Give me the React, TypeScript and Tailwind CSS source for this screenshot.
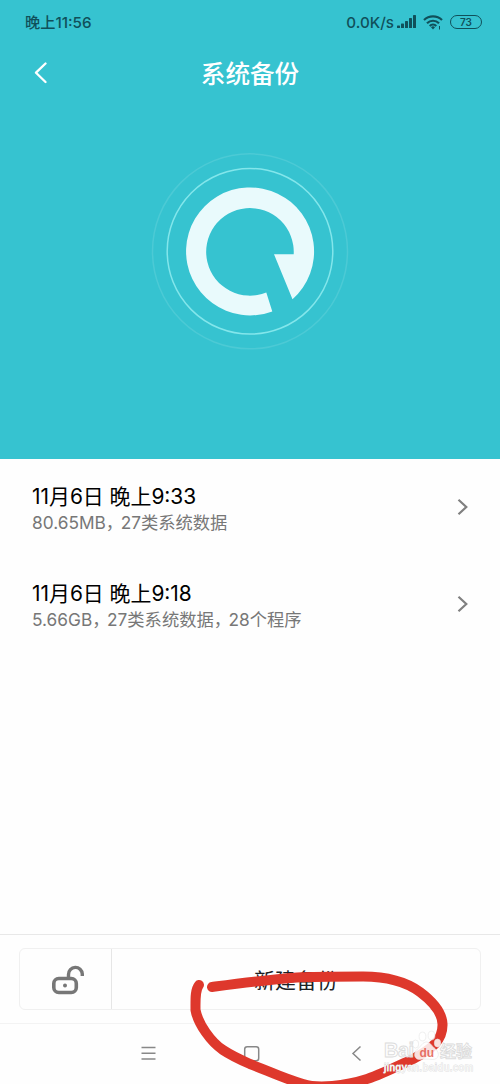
import { type FC } from 'react';

const backups = [
  {
    title: '11月6日 晚上9:33',
    details: ['80.65MB', '27类系统数据']
  },
  {
    title: '11月6日 晚上9:18',
    details: ['5.66GB', '27类系统数据', '28个程序']
  }
];

const StatusBar: FC = () => (
  <div className="flex h-[45px] items-center justify-between pr-[18px] pl-[25px] text-[#10505a]">
    <span className="pt-[2px] text-[15.2px] font-medium whitespace-nowrap">晚上11:56</span>
    <div className="flex items-center">
      <span className="mr-[3px] pt-px text-[15.2px] font-medium whitespace-nowrap">
        0.0K/s
      </span>
      <svg width="19" height="14" viewBox="0 0 19 14" fill="currentColor">
        <rect x="0" y="10.5" width="3" height="2.5" rx="0.6" />
        <rect x="4" y="8.5" width="3" height="4.5" rx="0.6" />
        <rect x="8" y="6" width="3" height="7" rx="0.6" />
        <rect x="12" y="3" width="3" height="10" rx="0.6" />
        <rect x="16" y="0" width="3" height="13" rx="0.6" />
      </svg>
      <svg
        className="ml-[7px]"
        width="20"
        height="15"
        viewBox="0 0 20 15"
        fill="none"
        stroke="currentColor"
        strokeWidth="2.2"
      >
        <path d="M1 5a13 13 0 0 1 18 0" />
        <path d="M4 8.2a8.6 8.6 0 0 1 12 0" />
        <path d="M6.7 11a4.7 4.7 0 0 1 6.6 0" />
        <path d="M8 12.2a3 3 0 0 1 4 0l-2 2.3z" fill="currentColor" stroke="none" />
        <path d="M16.5 11v3.5" strokeWidth="1" />
      </svg>
      <span className="ml-[7px] flex h-[14px] w-[32px] items-center justify-center rounded-full border-[1.5px] border-[#10505a] text-[10px] leading-none font-semibold">
        73
      </span>
    </div>
  </div>
);

const BackupLogo: FC = () => (
  <svg width="200" height="200" viewBox="150 151 200 200" fill="none">
    <circle cx="250" cy="251.3" r="97.5" stroke="#4ccad5" strokeWidth="1.5" />
    <circle cx="250" cy="251.3" r="82.8" stroke="#83e6eb" strokeWidth="1.5" />
    <path
      d="M272.3 311.4A64 64 0 1 1 292.5 299.3L274 254.3H293.7A43.8 43.8 0 1 0 266.3 292.5Z"
      fill="#e9fafc"
    />
  </svg>
);

const LockIcon: FC = () => (
  <svg width="32" height="30" viewBox="0 0 32 30" fill="none" stroke="#777">
    <rect x="1.8" y="13.5" width="22.5" height="14" rx="5" strokeWidth="3.6" />
    <path d="M16.5 13.5V9.500A6.800 6.800 0 0 1 30.300 9v2" strokeWidth="3.4" />
    <circle cx="13" cy="20.5" r="2" fill="#777" stroke="none" />
  </svg>
);

const Watermark: FC = () => (
  <div className="absolute top-[1028px] left-[383px] w-[100px] font-['Liberation_Sans','Noto_Sans_CJK_SC',sans-serif]">
    <svg width="106" height="48" viewBox="0 0 106 48" className="overflow-visible">
      <g fill="#fff" fillOpacity="0.85" stroke="#e4e4e4" strokeWidth="0.6">
        <ellipse cx="32.5" cy="16" rx="3.2" ry="4" />
        <ellipse cx="39.5" cy="8.5" rx="3.4" ry="4.4" />
        <ellipse cx="48.5" cy="7.5" rx="3.4" ry="4.4" />
        <ellipse cx="54.5" cy="15" rx="3.2" ry="4" />
        <path d="M43.5 14c-4 0-5 4-9 7-5 4.5-3 10.5 2 10.5 4-.6 9-.6 13 0 6 0 8-6 3-10.5-4-3-5-7-9-7z" />
        <g strokeWidth="0.9" stroke="#dcdcdc">
          <text x="1" y="29" fontSize="20" textLength="30" fontWeight="bold">
            Bai
          </text>
          <text x="57" y="29" fontSize="16" textLength="32" fontWeight="bold">
            经验
          </text>
        </g>
      </g>
      <text x="36.5" y="29" fontSize="12" fontWeight="bold" fill="#dc3a2c" fillOpacity="0.7">
        du
      </text>
      <text
        x="1"
        y="42.5"
        fontSize="10"
        textLength="89"
        fill="#fff"
        fillOpacity="0.9"
        stroke="#dedede"
        strokeWidth="0.9"
        paintOrder="stroke"
      >
        jingyan.baidu.com
      </text>
    </svg>
  </div>
);

export default function App() {
  return (
    <div className="relative flex h-[1084px] w-[500px] flex-col overflow-hidden bg-[#fefefe] font-['Inter','Noto_Sans_CJK_SC',sans-serif]">
      <header className="flex h-[459px] shrink-0 flex-col bg-[#36c3d0]">
        <StatusBar />
        <div className="grid h-[55px] grid-cols-3 items-center">
          <svg
            className="ml-[33px]"
            width="16"
            height="22"
            viewBox="0 0 16 22"
            fill="none"
            stroke="#fff"
            strokeWidth="2.3"
            strokeLinecap="round"
            strokeLinejoin="round"
          >
            <path d="M12.5 1.5L3 10.7L12.5 20" />
          </svg>
          <h1 className="pt-[3px] text-center text-[24.6px] font-medium whitespace-nowrap text-white">
            系统备份
          </h1>
        </div>
        <div className="mt-[51px] flex justify-center">
          <BackupLogo />
        </div>
      </header>

      <main className="flex grow flex-col pt-[24px]">
        {backups.map((backup) => (
          <div
            key={backup.title}
            className="mb-[24px] flex h-[73px] items-start justify-between pr-[31px] pl-[32px]"
          >
            <div className="whitespace-nowrap">
              <div className="text-[20.9px] leading-[27px] text-black">
                {backup.title}
              </div>
              <div className="text-[17.3px] leading-[25px] text-[#777]">
                {backup.details.map((detail, i) => (
                  <span key={detail}>
                    {i > 0 && <span className="tracking-[-2.5px]">，</span>}
                    {detail}
                  </span>
                ))}
              </div>
            </div>
            <svg
              className="mt-[15px]"
              width="12"
              height="18"
              viewBox="0 0 12 18"
              fill="none"
              stroke="#808080"
              strokeWidth="2.2"
            >
              <path d="M1.5 1.7L9.3 9L1.5 16.3" />
            </svg>
          </div>
        ))}
      </main>

      <footer className="h-[150px] shrink-0 border-t border-[#e8e8e8]">
        <div className="mx-[19px] mt-[13px] flex h-[62px] rounded-md border border-[#f0f0f0]">
          <div className="flex w-[92px] items-center justify-center border-r border-[#e6e6e6] pt-[2px] pl-[4px]">
            <LockIcon />
          </div>
          <div className="flex grow items-center justify-center pt-[3px] text-[21px] text-[#1c2226]">
            新建备份
          </div>
        </div>
        <nav className="mt-[13px] flex h-[61px] border-t border-[#f3f3f3]">
          <svg width="500" height="60" fill="none" stroke="#888" strokeWidth="1.5">
            <path d="M141.5 23.5h14M141.5 29.2h14M141.5 35h14" />
            <rect x="244.7" y="22.7" width="14" height="14" rx="2.5" />
            <path d="M360.5 22.5L353 29.5L360.5 36.5" />
          </svg>
        </nav>
      </footer>

      {/* hand-drawn marker */}
      <svg
        className="absolute inset-0"
        width="500"
        height="1084"
        fill="none"
        stroke="#de382c"
        strokeWidth="10"
        strokeLinecap="round"
        strokeLinejoin="round"
      >
        <path d="M199 985C195 990 195.500 999 195.500 1010C198 1024 211 1042 223 1050C232 1056 241 1060 250 1064C266 1070 285 1079 303 1084C318 1089 345 1086 367 1079C382 1074 400 1065 413 1059C432 1049 443 1040 442.500 1024C442 1011 432 1001 420 992C405 981 386 976.500 363 976.500C330 976.500 313 976.500 297 977.500C265 980 235 984 212 987" />
      </svg>

      <Watermark />
    </div>
  );
}
